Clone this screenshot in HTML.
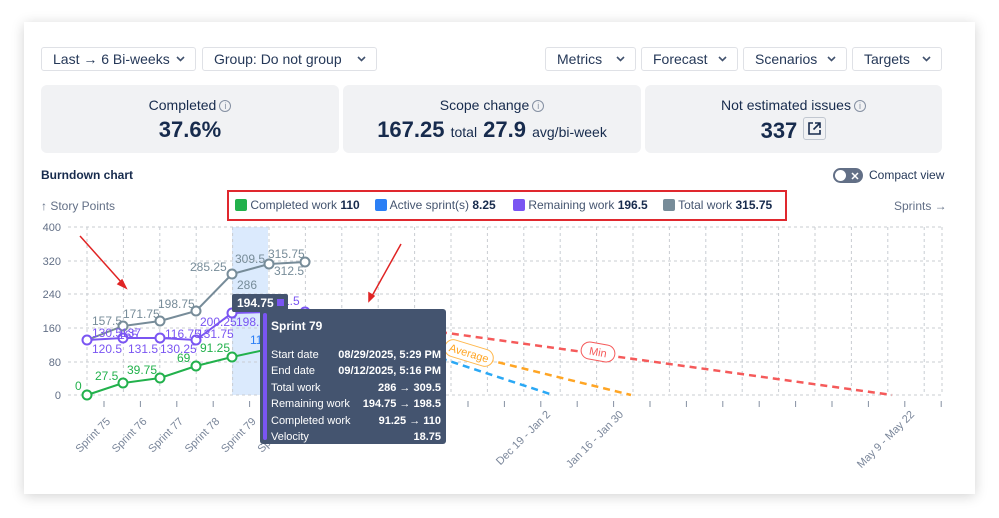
<!DOCTYPE html>
<html><head><meta charset="utf-8"><style>
*{box-sizing:border-box;margin:0;padding:0}
body{width:999px;height:518px;background:#fff;font-family:"Liberation Sans",sans-serif;color:#172b4d;position:relative;overflow:hidden}
.card{position:absolute;left:24px;top:22px;width:951px;height:472px;background:#fff;box-shadow:0 2px 12px rgba(0,0,0,.18)}
.dd{position:absolute;top:47px;height:24px;border:1px solid #dfe1e6;border-radius:3px;font-size:14px;color:#253858;line-height:22px;padding-left:11px;background:#fff}
.dd svg{position:absolute;right:10px;top:8px}
.box{position:absolute;top:85px;height:68px;background:#f1f2f4;border-radius:6px;text-align:center}
.box .t{font-size:14px;margin-top:12px;color:#172b4d}
.box .v{font-size:22px;font-weight:bold;margin-top:4px;color:#172b4d}
.box .v small{font-size:14px;font-weight:normal}
.info{display:inline-block;width:12px;height:12px;border:1px solid #8590a2;border-radius:50%;font-size:9px;line-height:10px;color:#8590a2;vertical-align:1px;margin-left:3px}
.abs{position:absolute}
</style></head><body>
<div class="card"></div>
<div class="dd" style="left:41px;width:155px">Last → 6 Bi-weeks<svg width="9" height="6"><path d="M1 1l3.5 3.5L8 1" stroke="#42526e" stroke-width="1.6" fill="none"/></svg></div>
<div class="dd" style="left:202px;width:175px">Group: Do not group<svg width="9" height="6"><path d="M1 1l3.5 3.5L8 1" stroke="#42526e" stroke-width="1.6" fill="none"/></svg></div>
<div class="dd" style="left:545px;width:91px">Metrics<svg width="9" height="6"><path d="M1 1l3.5 3.5L8 1" stroke="#42526e" stroke-width="1.6" fill="none"/></svg></div>
<div class="dd" style="left:641px;width:97px">Forecast<svg width="9" height="6"><path d="M1 1l3.5 3.5L8 1" stroke="#42526e" stroke-width="1.6" fill="none"/></svg></div>
<div class="dd" style="left:743px;width:104px">Scenarios<svg width="9" height="6"><path d="M1 1l3.5 3.5L8 1" stroke="#42526e" stroke-width="1.6" fill="none"/></svg></div>
<div class="dd" style="left:852px;width:90px">Targets<svg width="9" height="6"><path d="M1 1l3.5 3.5L8 1" stroke="#42526e" stroke-width="1.6" fill="none"/></svg></div>

<div class="box" style="left:41px;width:298px"><div class="t">Completed<span class="info">i</span></div><div class="v">37.6%</div></div>
<div class="box" style="left:343px;width:298px"><div class="t">Scope change<span class="info">i</span></div><div class="v">167.25 <small>total</small> 27.9 <small>avg/bi-week</small></div></div>
<div class="box" style="left:645px;width:297px"><div class="t">Not estimated issues<span class="info">i</span></div><div class="v">337 <span style="display:inline-block;width:23px;height:23px;border:1px solid #c1c7d0;border-radius:3px;vertical-align:-2px;position:relative"><svg width="15" height="15" style="position:absolute;left:3px;top:3px" viewBox="0 0 15 15"><path d="M6 2H2v11h11V9M8 2h5v5M13 2L6.5 8.5" stroke="#172b4d" stroke-width="1.6" fill="none"/></svg></span></div></div>

<div class="abs" style="left:41px;top:168px;font-size:12px;font-weight:bold">Burndown chart</div>
<div class="abs" style="left:833px;top:168px;width:30px;height:15px;border-radius:8px;background:#626f86"><div style="position:absolute;left:2px;top:2px;width:11px;height:11px;border-radius:50%;background:#fff"></div><svg width="8" height="8" style="position:absolute;left:18px;top:3.5px"><path d="M1 1l6 6M7 1L1 7" stroke="#fff" stroke-width="1.5"/></svg></div>
<div class="abs" style="left:869px;top:168px;font-size:12px;color:#253858">Compact view</div>
<div class="abs" style="left:41px;top:199px;font-size:12px;color:#626f86">↑ Story Points</div>
<div class="abs" style="left:894px;top:199px;font-size:12px;color:#626f86">Sprints →</div>

<div class="abs" style="left:227px;top:190px;width:560px;height:31px;border:2px solid #e0282e;font-size:12px;color:#44546f;line-height:27px;white-space:nowrap">
<span style="position:absolute;left:6px"><i style="display:inline-block;width:12px;height:12px;background:#22b14c;border-radius:2px;vertical-align:-2px"></i> Completed work <b style="color:#172b4d">110</b></span>
<span style="position:absolute;left:146px"><i style="display:inline-block;width:12px;height:12px;background:#2b7ff5;border-radius:2px;vertical-align:-2px"></i> Active sprint(s) <b style="color:#172b4d">8.25</b></span>
<span style="position:absolute;left:284px"><i style="display:inline-block;width:12px;height:12px;background:#7a55f2;border-radius:2px;vertical-align:-2px"></i> Remaining work <b style="color:#172b4d">196.5</b></span>
<span style="position:absolute;left:434px"><i style="display:inline-block;width:12px;height:12px;background:#778c99;border-radius:2px;vertical-align:-2px"></i> Total work <b style="color:#172b4d">315.75</b></span>
</div>

<svg class="abs" style="left:0;top:0" width="999" height="518" font-family="Liberation Sans, sans-serif">
<rect x="232" y="227" width="36" height="168" fill="#dbeafd"/>
<g stroke="#c8ccd2" stroke-dasharray="3,3" stroke-width="1">
<line x1="68" y1="227" x2="942" y2="227"/><line x1="68" y1="261" x2="942" y2="261"/><line x1="68" y1="294" x2="942" y2="294"/><line x1="68" y1="328" x2="942" y2="328"/><line x1="68" y1="362" x2="942" y2="362"/><line x1="68" y1="395" x2="942" y2="395"/>
<path d="M87 227V395M123.4 227V395M159.8 227V395M196.2 227V395M232.6 227V395M269 227V395M305.4 227V395M341.8 227V395M378.2 227V395M414.6 227V395M451 227V395M487.4 227V395M523.8 227V395M560.2 227V395M596.6 227V395M633 227V395M669.4 227V395M705.8 227V395M742.2 227V395M778.6 227V395M815 227V395M851.4 227V395M887.8 227V395M924.2 227V395M942 227V395"/>
</g>
<g stroke="#8590a2" stroke-width="1"><path d="M104 401v6M140.4 401v6M176.8 401v6M213.2 401v6M249.6 401v6M286 401v6M322.4 401v6M358.8 401v6M395.2 401v6M431.6 401v6M468 401v6M504.4 401v6M540.8 401v6M577.2 401v6M613.6 401v6M650 401v6M686.4 401v6M722.8 401v6M759.2 401v6M795.6 401v6M832 401v6M868.4 401v6M904.8 401v6M941.2 401v6"/></g>
<g font-size="11" fill="#626f86" text-anchor="end"><text x="61" y="231">400</text><text x="61" y="265">320</text><text x="61" y="298">240</text><text x="61" y="332">160</text><text x="61" y="366">80</text><text x="61" y="399">0</text></g>
<g font-size="11" fill="#7a869a" text-anchor="end">
<text transform="translate(111,422) rotate(-45)">Sprint 75</text><text transform="translate(147.4,422) rotate(-45)">Sprint 76</text><text transform="translate(183.8,422) rotate(-45)">Sprint 77</text><text transform="translate(220.2,422) rotate(-45)">Sprint 78</text><text transform="translate(256.6,422) rotate(-45)">Sprint 79</text><text transform="translate(293,422) rotate(-45)">Sprint 80</text>
<text transform="translate(551,415) rotate(-45)">Dec 19 - Jan 2</text><text transform="translate(624,415) rotate(-45)">Jan 16 - Jan 30</text><text transform="translate(915,415) rotate(-45)">May 9 - May 22</text></g>
<!-- forecasts -->
<path d="M440 332L892 395" stroke="#f55a5a" stroke-width="2.5" stroke-dasharray="7,5" fill="none"/>
<path d="M440 348L631 395" stroke="#ffa524" stroke-width="2.5" stroke-dasharray="7,5" fill="none"/>
<path d="M440 358L553 395" stroke="#2aa8f5" stroke-width="2.5" stroke-dasharray="7,5" fill="none"/>
<g transform="translate(469,353) rotate(17)"><rect x="-25" y="-8.5" width="50" height="17" rx="8.5" fill="#fff" stroke="#ffb84d"/><text x="0" y="4" font-size="11" fill="#ffa524" text-anchor="middle">Average</text></g>
<g transform="translate(598,352) rotate(10)"><rect x="-17" y="-8.5" width="34" height="17" rx="8.5" fill="#fff" stroke="#f55a5a"/><text x="0" y="4" font-size="11" fill="#f55a5a" text-anchor="middle">Min</text></g>
<!-- lines -->
<polyline points="87,340 123,326 160,321 196,311 232,274 269,264 305,262" fill="none" stroke="#778c99" stroke-width="2"/>
<polyline points="87,340 123,338 160,338 196,340 232,313 269,312 305,312" fill="none" stroke="#7a55f2" stroke-width="2"/>
<polyline points="87,395 123,383 160,378 196,366 232,357 269,349" fill="none" stroke="#22b14c" stroke-width="2"/>
<g fill="#fff" stroke-width="2">
<g stroke="#778c99"><circle cx="123" cy="326" r="4.5"/><circle cx="160" cy="321" r="4.5"/><circle cx="196" cy="311" r="4.5"/><circle cx="232" cy="274" r="4.5"/><circle cx="269" cy="264" r="4.5"/><circle cx="305" cy="262" r="4.5"/></g>
<g stroke="#7a55f2"><circle cx="87" cy="340" r="4.5"/><circle cx="123" cy="338" r="4.5"/><circle cx="160" cy="338" r="4.5"/><circle cx="196" cy="340" r="4.5"/><circle cx="232" cy="313" r="4.5"/><circle cx="305" cy="312" r="4.5"/></g>
<g stroke="#22b14c"><circle cx="87" cy="395" r="4.5"/><circle cx="123" cy="383" r="4.5"/><circle cx="160" cy="378" r="4.5"/><circle cx="196" cy="366" r="4.5"/><circle cx="232" cy="357" r="4.5"/></g>
</g>
<g font-size="12" fill="#778c99"><text x="92" y="325">157.5</text><text x="123" y="318">171.75</text><text x="158" y="308">198.75</text><text x="190" y="271">285.25</text><text x="235" y="263">309.5</text><text x="268" y="258">315.75</text><text x="237" y="289">286</text><text x="274" y="275">312.5</text></g>
<g font-size="12" fill="#7a55f2"><text x="92" y="337">130.5</text><text x="121" y="337">137</text><text x="92" y="353">120.5</text><text x="118" y="339">165</text><text x="128" y="353">131.5</text><text x="165" y="338">116.75</text><text x="160" y="353">130.25</text><text x="200" y="326">200.25</text><text x="197" y="338">131.75</text><text x="236" y="326">198.5</text><text x="283" y="305">1.5</text></g>
<g font-size="12" fill="#22b14c"><text x="75" y="390">0</text><text x="95" y="380">27.5</text><text x="127" y="374">39.75</text><text x="177" y="362">69</text><text x="200" y="352">91.25</text></g>
<text x="250" y="344" font-size="12" fill="#2b7ff5">110</text>
<!-- arrows -->
<g stroke="#e02424" stroke-width="1.5" fill="#e02424"><line x1="80" y1="236" x2="122" y2="283"/><path d="M126 288l-8-4 4-4z"/><line x1="401" y1="244" x2="372" y2="296"/><path d="M369 301l0-8 5 3z"/></g>
<!-- tooltip -->
<rect x="232" y="294" width="56" height="18" rx="2" fill="#44546f"/>
<text x="237" y="307" font-size="12" font-weight="bold" fill="#fff">194.75</text>
<rect x="277" y="299" width="7" height="7" fill="#7a55f2"/>
<rect x="260" y="309" width="186" height="135" rx="3" fill="#44546f"/>
<rect x="263" y="313" width="4" height="127" rx="2" fill="#7a55f2"/>
<g font-size="11" fill="#fff"><text x="271" y="330" font-weight="bold" font-size="12">Sprint 79</text>
<text x="271" y="358">Start date</text><text x="271" y="374">End date</text><text x="271" y="391">Total work</text><text x="271" y="407">Remaining work</text><text x="271" y="424">Completed work</text><text x="271" y="440">Velocity</text>
<g text-anchor="end" font-weight="bold"><text x="441" y="358">08/29/2025, 5:29 PM</text><text x="441" y="374">09/12/2025, 5:16 PM</text><text x="441" y="391">286 → 309.5</text><text x="441" y="407">194.75 → 198.5</text><text x="441" y="424">91.25 → 110</text><text x="441" y="440">18.75</text></g></g>
</svg>
</body></html>
